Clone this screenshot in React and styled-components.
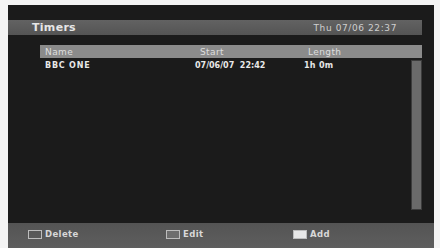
import styled, { createGlobalStyle } from 'styled-components';

const Global = createGlobalStyle`
    html, body {
        margin: 0;
        padding: 0;
        background: #f4f4f4;
    }
    body {
        font-family: "DejaVu Sans", "Liberation Sans", sans-serif;
    }
`;

const Screen = styled.div`
    margin: 5px 6px 0 8px;
    height: 243px;
    background: #1b1b1b;
    display: flex;
    flex-direction: column;
    overflow: hidden;
`;
const TitleBar = styled.div`
    margin: 15px 12px 0 0;
    height: 15px;
    padding: 0 25px 0 24px;
    background: linear-gradient(#626262, #545454);
    display: flex;
    align-items: center;
    justify-content: space-between;
`;
const Title = styled.span`
    color: #e6e6e6;
    font-size: 11px;
    font-weight: bold;
    letter-spacing: 0.3px;
`;
const Clock = styled.span`
    color: #cfcfcf;
    font-size: 9px;
    letter-spacing: 0.6px;
`;
const List = styled.div`
    flex: 1;
    margin: 10px 12px 13px 32px;
    display: flex;
    flex-direction: column;
`;
const HeadRow = styled.div`
    height: 13px;
    background: #8b8b8b;
    display: grid;
    grid-template-columns: 155px 108px 1fr;
    align-items: center;
    padding-left: 5px;
    color: #dedede;
    font-size: 9px;
    letter-spacing: 0.4px;
`;
const Body = styled.div`
    flex: 1;
    display: flex;
`;
const Rows = styled.div`
    flex: 1;
`;
const Row = styled.div`
    height: 14px;
    display: grid;
    grid-template-columns: 150px 109px 1fr;
    align-items: center;
    padding-left: 5px;
    color: #e8e8e8;
    font-size: 8px;
    font-weight: bold;
    white-space: pre;
`;
const Cell = styled.span`
    letter-spacing: ${p => p.ls || 0}px;
`;
const Scroll = styled.div`
    width: 9px;
    margin: 2px 0 0;
    background: #6a6a6a;
    border: 1px solid #3c3c3c;
    height: 148px;
`;
const Footer = styled.div`
    height: 25px;
    background: linear-gradient(#545454, #5e5e5e);
    display: flex;
    align-items: center;
    padding-left: 20px;
    padding-bottom: 3px;
    box-sizing: border-box;
`;
const Key = styled.div`
    display: flex;
    align-items: center;
    gap: 3px;
    width: ${p => p.w}px;
    color: #d8d8d8;
    font-size: 8.5px;
    font-weight: bold;
    letter-spacing: 0.4px;
`;
const KeyBox = styled.span`
    width: 12px;
    height: 7px;
    border: 1px solid #bdbdbd;
    background: ${p => (p.fill ? '#e8e8e8' : p.dim ? '#6e6e6e' : 'transparent')};
`;

export default function App() {
    return (
        <>
            <Global />
            <Screen>
                <TitleBar>
                    <Title>Timers</Title>
                    <Clock>Thu 07/06 22:37</Clock>
                </TitleBar>
                <List>
                    <HeadRow>
                        <span>Name</span>
                        <span>Start</span>
                        <span>Length</span>
                    </HeadRow>
                    <Body>
                        <Rows>
                            <Row>
                                <Cell ls={0.8}>BBC ONE</Cell>
                                <Cell>07/06/07  22:42</Cell>
                                <Cell ls={0.3}>1h 0m</Cell>
                            </Row>
                        </Rows>
                        <Scroll />
                    </Body>
                </List>
                <Footer>
                    <Key w={138}><KeyBox />Delete</Key>
                    <Key w={127}><KeyBox dim />Edit</Key>
                    <Key w={60}><KeyBox fill />Add</Key>
                </Footer>
            </Screen>
        </>
    );
}
